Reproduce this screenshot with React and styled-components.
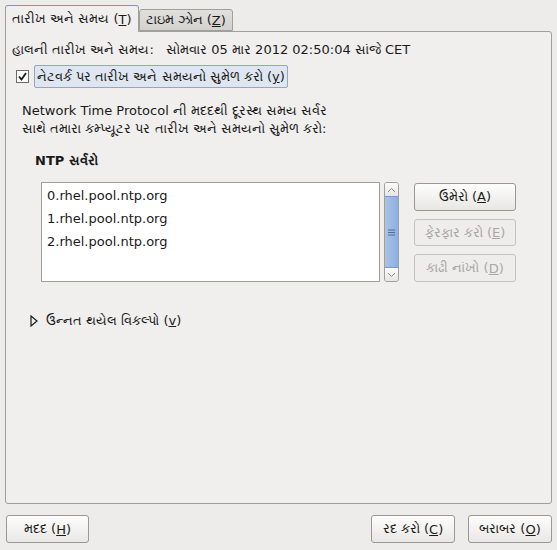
import React from 'react';
import styled, { createGlobalStyle } from 'styled-components';

const GlobalStyle = createGlobalStyle`
  html, body {
    margin: 0;
    padding: 0;
    background: #edeceb;
  }
  body {
    font-family: "DejaVu Sans", "Noto Sans", sans-serif;
    font-size: 13px;
    color: #1a1a1a;
  }
`;

const Window = styled.div`
  width: 557px;
  height: 550px;
  box-sizing: border-box;
  padding: 5px 5px 7px 5px;
  display: flex;
  flex-direction: column;
`;

const TabRow = styled.div`
  display: flex;
  align-items: flex-end;
  height: 26px;
  position: relative;
  z-index: 1;
`;

const Tab = styled.div`
  box-sizing: border-box;
  height: ${p => (p.$active ? '27px' : '22px')};
  padding: 0 6px;
  display: flex;
  align-items: center;
  border: 1px solid #a19f9c;
  border-bottom: ${p => (p.$active ? 'none' : '1px solid #a19f9c')};
  border-top-color: ${p => (p.$active ? '#7f9ab8' : '#a19f9c')};
  border-radius: 3px 3px 0 0;
  background: ${p =>
    p.$active ? '#f0efee' : 'linear-gradient(#e2e0dd, #d3d1ce)'};
  margin-bottom: ${p => (p.$active ? '-1px' : '0')};
  white-space: nowrap;
`;

const Panel = styled.div`
  flex: 1;
  box-sizing: border-box;
  border: 1px solid #a19f9c;
  border-radius: 0 3px 3px 3px;
  background: #f0efee;
  padding: 9px 6px 0 6px;
  display: flex;
  flex-direction: column;
`;

const Line = styled.div`
  height: 18px;
  line-height: 18px;
  white-space: nowrap;
`;

const CheckRow = styled.div`
  display: flex;
  align-items: center;
  gap: 5px;
  margin-top: 6px;
  padding-left: 4px;
`;

const Check = styled.span`
  width: 11px;
  height: 11px;
  border: 1px solid #6d6b68;
  background: #fff;
  display: flex;
  align-items: center;
  justify-content: center;
`;

const FocusLabel = styled.span`
  box-sizing: border-box;
  height: 23px;
  padding: 0 2px;
  display: flex;
  align-items: center;
  background: #dfe6ef;
  border: 1px solid #91a7c4;
  border-radius: 2px;
  white-space: nowrap;
`;

const Paragraph = styled.div`
  margin: 14px 0 0 10px;
  line-height: 18px;
`;

const SectionTitle = styled.div`
  margin: 14px 0 0 23px;
  font-weight: bold;
  line-height: 18px;
`;

const ServerArea = styled.div`
  display: flex;
  margin: 12px 0 0 29px;
  height: 100px;
`;

const ListBox = styled.div`
  box-sizing: border-box;
  width: 339px;
  height: 100px;
  border: 1px solid #a19f9c;
  background: #fff;
  padding-top: 1px;
`;

const ListItem = styled.div`
  height: 23px;
  line-height: 23px;
  padding-left: 5px;
`;

const ScrollBar = styled.div`
  box-sizing: border-box;
  width: 15px;
  height: 100px;
  margin-left: 4px;
  display: flex;
  flex-direction: column;
  border: 1px solid #a19f9c;
  border-radius: 3px;
  overflow: hidden;
  background: #e9e7e4;
`;

const Stepper = styled.div`
  height: 13px;
  display: flex;
  align-items: center;
  justify-content: center;
  background: linear-gradient(#fbfbfa, #e7e5e2);
`;

const Thumb = styled.div`
  flex: 1;
  background: linear-gradient(90deg, #a9c3e6, #8cafdf);
  border-top: 1px solid #7a99c6;
  border-bottom: 1px solid #7a99c6;
  display: flex;
  align-items: center;
  justify-content: center;
`;

const SideButtons = styled.div`
  display: flex;
  flex-direction: column;
  gap: 8px;
  margin-left: 15px;
  padding-top: 1px;
`;

const Button = styled.div`
  box-sizing: border-box;
  width: ${p => p.$w || '102px'};
  height: 28px;
  display: flex;
  align-items: center;
  justify-content: center;
  border: 1px solid ${p => (p.$disabled ? '#c4c2bf' : '#9a9895')};
  border-radius: 3px;
  background: ${p =>
    p.$disabled ? '#eeedec' : 'linear-gradient(#fdfdfc, #e9e7e4)'};
  color: ${p => (p.$disabled ? '#a8a6a3' : '#1a1a1a')};
  white-space: nowrap;
`;

const Expander = styled.div`
  display: flex;
  align-items: center;
  gap: 8px;
  margin: 30px 0 0 18px;
  height: 18px;
`;

const Footer = styled.div`
  display: flex;
  justify-content: space-between;
  margin-top: 11px;
  padding-left: 1px;
`;

const FooterRight = styled.div`
  display: flex;
  gap: 13px;
  padding-right: 0;
`;

const Arrow = ({ up }) => (
  <svg width="9" height="6" viewBox="0 0 9 6">
    <path
      d={up ? 'M1 5 L4.5 1.5 L8 5' : 'M1 1 L4.5 4.5 L8 1'}
      fill="none"
      stroke="#8a8884"
      strokeWidth="1"
    />
  </svg>
);

const App = () => (
  <Window>
    <GlobalStyle />
    <TabRow>
      <Tab $active>
        તારીખ અને સમય (<u>T</u>)
      </Tab>
      <Tab>
        ટાઇમ ઝોન (<u>Z</u>)
      </Tab>
    </TabRow>
    <Panel>
      <Line>હાલની તારીખ અને સમય:&nbsp;&nbsp; સોમવાર 05 માર 2012 02:50:04 સાંજે CET</Line>
      <CheckRow>
        <Check>
          <svg width="9" height="9" viewBox="0 0 9 9">
            <path d="M1 4.5 L3.5 7.5 L8 1" fill="none" stroke="#1a1a1a" strokeWidth="1.8" />
          </svg>
        </Check>
        <FocusLabel>
          નેટવર્ક પર તારીખ અને સમયનો સુમેળ કરો (<u>y</u>)
        </FocusLabel>
      </CheckRow>
      <Paragraph>
        Network Time Protocol ની મદદથી દૂરસ્થ સમય સર્વર
        <br />
        સાથે તમારા કમ્પ્યૂટર પર તારીખ અને સમયનો સુમેળ કરો:
      </Paragraph>
      <SectionTitle>NTP સર્વરો</SectionTitle>
      <ServerArea>
        <ListBox>
          <ListItem>0.rhel.pool.ntp.org</ListItem>
          <ListItem>1.rhel.pool.ntp.org</ListItem>
          <ListItem>2.rhel.pool.ntp.org</ListItem>
        </ListBox>
        <ScrollBar>
          <Stepper>
            <Arrow up />
          </Stepper>
          <Thumb>
            <svg width="7" height="7" viewBox="0 0 7 7">
              <path d="M0 1 H7 M0 3.5 H7 M0 6 H7" stroke="#4a6a98" strokeWidth="1" />
            </svg>
          </Thumb>
          <Stepper>
            <Arrow />
          </Stepper>
        </ScrollBar>
        <SideButtons>
          <Button>
            ઉમેરો (<u>A</u>)
          </Button>
          <Button $disabled>
            ફેરફાર કરો (<u>E</u>)
          </Button>
          <Button $disabled>
            કાઢી નાંખો (<u>D</u>)
          </Button>
        </SideButtons>
      </ServerArea>
      <Expander>
        <svg width="8" height="12" viewBox="0 0 8 12">
          <path d="M1 1 L7 6 L1 11 Z" fill="none" stroke="#1a1a1a" strokeWidth="1.2" />
        </svg>
        <span>
          ઉન્નત થયેલ વિકલ્પો (<u>v</u>)
        </span>
      </Expander>
    </Panel>
    <Footer>
      <Button $w="83px">
        મદદ (<u>H</u>)
      </Button>
      <FooterRight>
        <Button $w="84px">
          રદ કરો (<u>C</u>)
        </Button>
        <Button $w="84px">
          બરાબર (<u>O</u>)
        </Button>
      </FooterRight>
    </Footer>
  </Window>
);

export default App;
